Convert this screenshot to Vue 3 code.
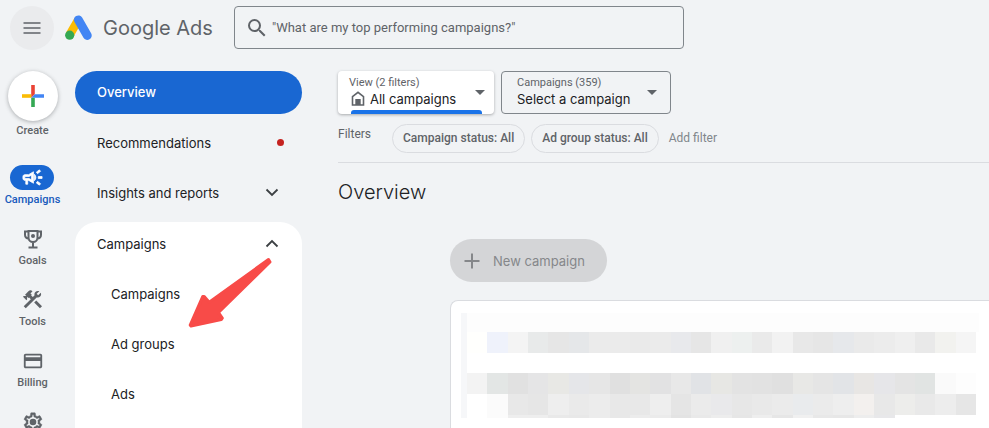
<script setup>
import { ref } from 'vue'

const query = ref('')

const railItems = [
  { label: 'Campaigns', icon: 'campaign', active: true },
  { label: 'Goals', icon: 'trophy' },
  { label: 'Tools', icon: 'tools' },
  { label: 'Billing', icon: 'card' },
]

const subItems = ['Campaigns', 'Ad groups', 'Ads']
const chips = ['Campaign status: All', 'Ad group status: All']

const split = (s) => s.split(' ').map((c) => '#' + c)
const mosaic = [
  { size: 'blank', cells: [] },
  {
    size: 'full',
    cells: split('fffffd eff2fb f4f4f4 e8eaea e6e6e6 e5e7e9 ebebeb ebebeb eaeaea ebebeb e8e9ec e6e6e6 f0f0f0 edf0ef eaeaea f2f2f2 e8e8e8 e6e6e6 e6e8eb eaeaea ececec efefef e9e9e9 f2f2ef f5f5f5'),
  },
  { size: 'space', cells: [] },
  {
    size: 'full',
    cells: split('f3f3f3 e3e6e5 e1e1e1 e5e5e6 e8e8e5 e5e6e9 e6e6e6 e0e0e0 e4e4e2 e2e2e3 e8e8e8 e1e3e6 e7e7e4 e3e3e3 e2e2e2 e0e0e0 e8e8e6 e5e5e5 e2e4e7 e8e6e4 e6e6e9 e4e4e4 e1e4e3 fafafa fdfdfd'),
  },
  {
    size: 'full',
    cells: split('ffffff fbfbfb e8e8e8 e6e6e6 eeeeee eaeaea ececec e8e8e8 e8e8e8 eeeeee e5e5e5 ebebeb e9e9eb e7e7e7 e9e9e9 ebebeb e9ebed ebebeb eeeeee f3f0ee e8e8e8 ededeb e9e9e9 ededed e6e6e6'),
  },
  {
    size: 'thin',
    cells: split('ffffff fbfbfb eeeeee eeeeee e9e9e9 e8e8e8 ececec e8e8e8 ececec ebebeb e3e3e3 e9e9e9 ededed e6e6e6 eeeeee e6e6e6 f0f0f0 e8e8e8 e7e7e7 ededed e8e8ea'),
  },
]
</script>

<template>
  <div class="app">
    <header class="topbar">
      <div class="menu-slot">
        <button class="menu" type="button" aria-label="Main menu">
          <svg width="18" height="12" viewBox="0 0 18 12"><path d="M0.500 1h17M0.500 6h17M0.500 11h17" stroke="#5f6368" stroke-width="1.700" /></svg>
        </button>
      </div>
      <a class="brand" href="#">
        <svg width="27" height="26" viewBox="0 0 27 26">
          <path d="M13.300 4.800L4.600 19.800" stroke="#fbbc04" stroke-width="8.600" />
          <path d="M13.300 4.800l9 15.700" stroke="#4285f4" stroke-width="8.800" stroke-linecap="round" />
          <circle cx="4.700" cy="20.200" r="4.600" fill="#34a853" />
        </svg>
        <span>Google Ads</span>
      </a>
      <label class="search">
        <svg width="24" height="24" viewBox="0 0 24 24" fill="#5f6368"><path d="M15.500 14h-.79l-.28-.27A6.471 6.471 0 0 0 16 9.500 6.500 6.500 0 1 0 9.500 16c1.610 0 3.090-.59 4.230-1.570l.27.28v.79l5 4.990L20.490 19l-4.990-5zm-6 0C7.010 14 5 11.990 5 9.500S7.010 5 9.500 5 14 7.010 14 9.500 11.990 14 9.500 14z" /></svg>
        <input v-model="query" type="search" aria-label="Search" placeholder="&quot;What are my top performing campaigns?&quot;" />
      </label>
    </header>

    <div class="body">
      <nav class="rail" aria-label="Primary">
        <button class="create" type="button">
          <span class="create-disc">
            <svg width="22" height="22" viewBox="0 0 22 22">
              <path d="M9.200 0h3.600v9.200l-3.600 3.600z" fill="#ea4335" />
              <path d="M0 9.200h9.200v3.600H0z" fill="#fbbc04" />
              <path d="M12.800 9.200H22v3.600h-9.200l-3.600 0z" fill="#4285f4" />
              <path d="M9.200 12.800h3.600V22H9.200z" fill="#34a853" />
            </svg>
          </span>
          <span class="rail-label">Create</span>
        </button>
        <a v-for="item in railItems" :key="item.label" href="#" class="rail-item" :class="{ active: item.active }">
          <span class="rail-icon">
            <svg v-if="item.icon === 'campaign'" width="23" height="23" viewBox="0 0 24 24" fill="currentColor">
              <path d="M18 11v2h4v-2h-4zm-2 6.610c.96.71 2.210 1.650 3.200 2.390.4-.53.8-1.070 1.200-1.600-.99-.74-2.240-1.680-3.200-2.400-.4.54-.8 1.080-1.200 1.610zM20.400 5.600c-.4-.53-.8-1.070-1.200-1.600-.99.74-2.240 1.680-3.200 2.400.4.53.8 1.070 1.200 1.600.96-.72 2.210-1.650 3.200-2.400zM4 9c-1.100 0-2 .9-2 2v2c0 1.100.9 2 2 2h1v4h2v-4h1l5 3V6L8 9H4zm5.030 1.710L11 9.530v4.940l-1.970-1.180-.48-.29H4v-2h4.550l.48-.29zM15.500 12c0-1.330-.58-2.530-1.500-3.350v6.690c.92-.81 1.500-2.010 1.500-3.340z" stroke="currentColor" stroke-width=".8" />
            </svg>
            <svg v-else-if="item.icon === 'trophy'" width="24" height="24" viewBox="0 0 24 24" fill="none" stroke="currentColor" stroke-width="2">
              <path d="M7.500 4h9v6.500a4.500 4.500 0 0 1-9 0zM7.500 4.500H4v3.300c0 2.300 1.600 3.700 4 3.900M16.500 4.500H20v3.300c0 2.300-1.600 3.700-4 3.900M12 15v5M7.500 20.500h9" />
              <circle cx="12" cy="9" r="2" fill="currentColor" stroke="none" />
            </svg>
            <svg v-else-if="item.icon === 'tools'" width="23" height="23" viewBox="0 0 24 24" fill="currentColor">
              <path d="M13.783 15.172l2.121-2.121 5.996 5.996-2.121 2.121z" />
              <path d="M17.500 10c1.930 0 3.500-1.570 3.500-3.500 0-.58-.16-1.120-.41-1.600l-2.700 2.700-1.490-1.490 2.700-2.700c-.48-.25-1.020-.41-1.600-.41C15.570 3 14 4.570 14 6.500c0 .41.08.8.21 1.160l-1.850 1.850-1.780-1.780.71-.71-1.410-1.410L12 3.490a3 3 0 0 0-4.240 0L4.220 7.030l1.410 1.410H2.810l-.71.71 3.540 3.540.71-.71V9.150l1.410 1.410.71-.71 1.780 1.780-7.410 7.410 2.120 2.120L16.340 9.790c.36.13.75.21 1.160.21z" />
            </svg>
            <svg v-else width="22" height="22" viewBox="0 0 24 24" fill="currentColor">
              <path d="M20 4H4c-1.110 0-1.990.89-1.990 2L2 18c0 1.110.89 2 2 2h16c1.110 0 2-.89 2-2V6c0-1.110-.89-2-2-2zm0 14H4v-6h16v6zm0-10H4V6h16v2z" />
            </svg>
          </span>
          <span class="rail-label">{{ item.label }}</span>
        </a>
        <a href="#" class="rail-item" aria-label="Admin">
          <span class="rail-icon">
            <svg width="22" height="22" viewBox="0 0 24 24" fill="currentColor">
              <path d="M19.430 12.980c.04-.32.07-.64.07-.98s-.03-.66-.07-.98l2.110-1.650c.19-.15.24-.42.12-.64l-2-3.460c-.09-.16-.26-.25-.44-.25-.06 0-.12.01-.17.03l-2.490 1c-.52-.4-1.080-.73-1.690-.98l-.38-2.650C14.460 2.180 14.250 2 14 2h-4c-.25 0-.46.18-.49.42l-.38 2.650c-.61.25-1.170.59-1.690.98l-2.490-1c-.06-.02-.12-.03-.18-.03-.17 0-.34.09-.43.25l-2 3.460c-.13.22-.07.49.12.64l2.110 1.650c-.04.32-.07.65-.07.98s.03.66.07.98l-2.110 1.650c-.19.15-.24.42-.12.64l2 3.460c.09.16.26.25.44.25.06 0 .12-.01.17-.03l2.490-1c.52.4 1.080.73 1.690.98l.38 2.650c.03.24.24.42.49.42h4c.25 0 .46-.18.49-.42l.38-2.650c.61-.25 1.170-.59 1.690-.98l2.490 1c.06.02.12.03.18.03.17 0 .34-.09.43-.25l2-3.460c.12-.22.07-.49-.12-.64l-2.110-1.650zm-1.980-1.710c.04.31.05.52.05.73s-.02.43-.05.73l-.14 1.130.89.7 1.080.84-.7 1.210-1.270-.51-1.040-.42-.9.68c-.43.32-.84.56-1.250.73l-1.060.43-.16 1.130-.2 1.350h-1.400l-.19-1.350-.16-1.130-1.060-.43c-.43-.18-.83-.41-1.230-.71l-.91-.7-1.060.43-1.270.51-.7-1.210 1.080-.84.89-.7-.14-1.130c-.03-.31-.05-.54-.05-.74s.02-.43.05-.73l.14-1.130-.89-.7-1.080-.84.7-1.210 1.270.51 1.040.42.9-.68c.43-.32.84-.56 1.250-.73l1.060-.43.16-1.130.2-1.350h1.390l.19 1.350.16 1.130 1.060.43c.43.18.83.41 1.230.71l.91.7 1.060-.43 1.270-.51.7 1.210-1.070.85-.89.7.14 1.130z" stroke="currentColor" stroke-width=".5" />
              <circle cx="12" cy="12" r="3.600" />
            </svg>
          </span>
        </a>
      </nav>

      <nav class="side" aria-label="Sections">
        <a class="side-item current" href="#">Overview</a>
        <a class="side-item" href="#">Recommendations<span class="dot"></span></a>
        <button class="side-item" type="button" aria-expanded="false">
          Insights and reports
          <svg width="14" height="9" viewBox="0 0 14 9"><path d="M1.500 1.500L7 7l5.500-5.500" fill="none" stroke="#3c4043" stroke-width="1.800" /></svg>
        </button>
        <div class="panel">
          <button class="side-item" type="button" aria-expanded="true">
            Campaigns
            <svg width="14" height="9" viewBox="0 0 14 9"><path d="M1.500 7.500L7 2l5.500 5.500" fill="none" stroke="#3c4043" stroke-width="1.800" /></svg>
          </button>
          <a v-for="s in subItems" :key="s" class="side-item sub" href="#">{{ s }}</a>
          <svg class="pointer" width="84" height="72" viewBox="0 0 84 72">
            <path d="M80.500 2.500L82 5 30.500 55.500 34.300 61.200 33.300 62.500 3 69 2.200 68 14.700 39.600 16.200 39.600 21.200 45.200Z" fill="#f84b48" stroke="#f84b48" stroke-width="3" stroke-linejoin="round" />
          </svg>
        </div>
      </nav>

      <main class="main">
        <div class="scopes">
          <div class="scope view">
            <div class="scope-text">
              <label for="view">View (2 filters)</label>
              <div class="scope-value">
                <svg width="14" height="15" viewBox="0 0 14 15"><path d="M1.500 5.600L7 1.300l5.500 4.300V14h-11z" fill="none" stroke="#5f6368" stroke-width="1.600" /><path d="M4.300 8h5.400v6H4.300z" fill="#5f6368" /></svg>
                <select id="view"><option>All campaigns</option></select>
              </div>
            </div>
            <svg class="caret" width="10" height="5" viewBox="0 0 10 5"><path d="M0 0h10L5 5z" fill="#5f6368" /></svg>
          </div>
          <div class="scope pick">
            <div class="scope-text">
              <label for="pick">Campaigns (359)</label>
              <div class="scope-value">
                <select id="pick"><option>Select a campaign</option></select>
              </div>
            </div>
            <svg class="caret" width="10" height="5" viewBox="0 0 10 5"><path d="M0 0h10L5 5z" fill="#5f6368" /></svg>
          </div>
        </div>

        <div class="filters">
          <span class="filters-label">Filters</span>
          <button v-for="c in chips" :key="c" class="chip" type="button">{{ c }}</button>
          <button class="add" type="button">Add filter</button>
        </div>

        <h1>Overview</h1>

        <section class="content">
          <button class="new" type="button" disabled>
            <svg width="16" height="16" viewBox="0 0 16 16"><path d="M8 0.500v15M0.500 8h15" stroke="#85878a" stroke-width="2" /></svg>
            New campaign
          </button>
          <div class="card">
            <div class="mosaic">
              <div v-for="(row, i) in mosaic" :key="i" class="mosaic-row" :class="row.size">
                <span v-for="(c, j) in row.cells" :key="j" :style="{ background: c }"></span>
              </div>
            </div>
          </div>
        </section>
      </main>
    </div>
  </div>
</template>

<style>
body {
  background: #f1f3f5;
}
</style>

<style scoped>
.app {
  display: flex;
  flex-direction: column;
  height: 100vh;
  overflow: hidden;
  background: #f1f3f5;
  color: #202124;
  font-family: Roboto, "Liberation Sans", sans-serif;
  font-size: 12px;
}
.app *,
.app {
  box-sizing: border-box;
}
button,
input,
select {
  margin: 0;
  padding: 0;
  border: 0;
  background: none;
  color: inherit;
  font: inherit;
}
a {
  color: inherit;
  text-decoration: none;
}
svg {
  display: block;
  flex: none;
}

.topbar {
  display: flex;
  align-items: center;
  flex: none;
  height: 55px;
}
.menu-slot {
  display: flex;
  justify-content: center;
  width: 64px;
}
.menu {
  display: grid;
  place-items: center;
  width: 44px;
  height: 44px;
  border-radius: 50%;
  background: #eaebed;
}
.brand {
  display: flex;
  align-items: center;
  gap: 11px;
  width: 170px;
  padding-left: 1px;
  color: #5f6368;
  font-family: Inter, sans-serif;
  font-size: 20px;
  white-space: nowrap;
}
.search {
  display: flex;
  align-items: center;
  gap: 3px;
  flex: 0 1 450px;
  height: 43px;
  padding: 0 10px;
  border: 1px solid #80868b;
  border-radius: 4px;
}
.search input {
  flex: 1;
  min-width: 0;
  outline: 0;
  font-size: 13px;
  appearance: none;
}
.search input::placeholder {
  color: #5f6368;
  opacity: 1;
}

.body {
  display: flex;
  flex: 1;
  min-height: 0;
  padding-top: 16px;
}

.rail {
  display: flex;
  flex-direction: column;
  align-items: center;
  flex: none;
  width: 65px;
  margin-right: 10px;
  color: #5f6368;
}
.rail-label {
  font-size: 11px;
  font-weight: 500;
  line-height: 14px;
}
.create,
.rail-item {
  display: flex;
  flex-direction: column;
  align-items: center;
  gap: 3px;
}
.create {
  margin-bottom: 27px;
}
.create-disc {
  display: grid;
  place-items: center;
  width: 50px;
  height: 50px;
  border-radius: 50%;
  background: #fff;
  box-shadow: 0 1px 4px rgba(60, 64, 67, 0.4);
}
.rail-item {
  margin-bottom: 19px;
}
.rail-icon {
  display: grid;
  place-items: center;
  width: 44px;
  height: 25px;
  border-radius: 13px;
}
.active {
  color: #185abc;
}
.active .rail-icon {
  background: #1967d2;
  color: #fff;
}

.side {
  display: flex;
  flex-direction: column;
  gap: 7px;
  flex: none;
  width: 227px;
  font-family: Inter, sans-serif;
  font-size: 13px;
}
.side-item {
  display: flex;
  align-items: center;
  justify-content: space-between;
  flex: none;
  width: 100%;
  height: 43px;
  padding: 0 23px 0 22px;
  text-align: left;
}
.current {
  padding-bottom: 2px;
  border-radius: 22px;
  background: #1967d2;
  color: #fff;
  font-weight: 500;
}
.dot {
  width: 7px;
  height: 7px;
  margin-right: -5px;
  border-radius: 50%;
  background: #c5221f;
}
.panel {
  position: relative;
  display: flex;
  flex-direction: column;
  gap: 7px;
  flex: 1;
  margin-top: 1px;
  border-radius: 22px 22px 0 0;
  background: #fff;
}
.sub {
  padding-left: 36px;
}
.pointer {
  position: absolute;
  top: 35px;
  left: 113px;
}

.main {
  flex: 1;
  min-width: 0;
  padding-left: 36px;
}
.scopes {
  display: flex;
  gap: 7px;
}
.scope {
  display: flex;
  align-items: center;
  justify-content: space-between;
  height: 43px;
  border-radius: 4px;
}
.scope-text {
  padding-bottom: 2px;
}
.view {
  position: relative;
  width: 156px;
  padding: 0 9px 0 11px;
  background: #fff;
  box-shadow: 0 1px 3px rgba(60, 64, 67, 0.4);
}
.view::after {
  content: "";
  position: absolute;
  right: 12px;
  bottom: 0;
  left: 13px;
  height: 4px;
  border-radius: 3px 3px 0 0;
  background: #1a73e8;
}
.pick {
  width: 170px;
  padding: 0 13px 0 15px;
  border: 1px solid #80868b;
}
.scope label {
  display: block;
  color: #5f6368;
  font-size: 11px;
  line-height: 14px;
}
.scope-value {
  display: flex;
  align-items: center;
  gap: 5px;
}
.view .scope-value {
  padding-left: 2px;
}
.scope select {
  appearance: none;
  height: 18px;
  font-family: Inter, sans-serif;
  font-size: 13px;
  line-height: 18px;
}

.filters {
  display: flex;
  align-items: center;
  height: 49px;
  border-bottom: 1px solid #dadce0;
  color: #5f6368;
}
.filters-label {
  width: 54px;
  padding-bottom: 8px;
}
.chip {
  height: 29px;
  margin-right: 6px;
  padding: 0 10px;
  border: 1px solid #dadce0;
  border-radius: 15px;
  font-weight: 500;
}
.add {
  margin-left: 4px;
  color: #80868b;
}
h1 {
  margin: 16px 0 0;
  font-family: Inter, sans-serif;
  font-size: 20px;
  font-weight: 300;
  line-height: 26px;
}
.content {
  padding: 34px 0 0 112px;
}
.new {
  display: flex;
  align-items: center;
  gap: 13px;
  height: 43px;
  padding: 0 22px 0 14px;
  border-radius: 22px;
  background: #d4d5d7;
  color: #85878a;
  font-family: Inter, sans-serif;
  font-size: 13px;
}
.card {
  height: 200px;
  margin-top: 18px;
  padding: 12px 10px 0;
  border: 1px solid #dadce0;
  border-right: 0;
  border-bottom: 0;
  border-radius: 8px 0 0 0;
  background: #fff;
}
.mosaic {
  padding-right: 3px;
  border-left: 6px solid #f6f7f9;
}
.mosaic-row {
  display: grid;
  grid-template-columns: repeat(25, 1fr);
}
.blank {
  height: 19px;
  margin-right: -3px;
  background: #fdfdfd;
}
.full {
  height: 21px;
}
.space {
  height: 20px;
}
.thin {
  height: 3px;
}
</style>
